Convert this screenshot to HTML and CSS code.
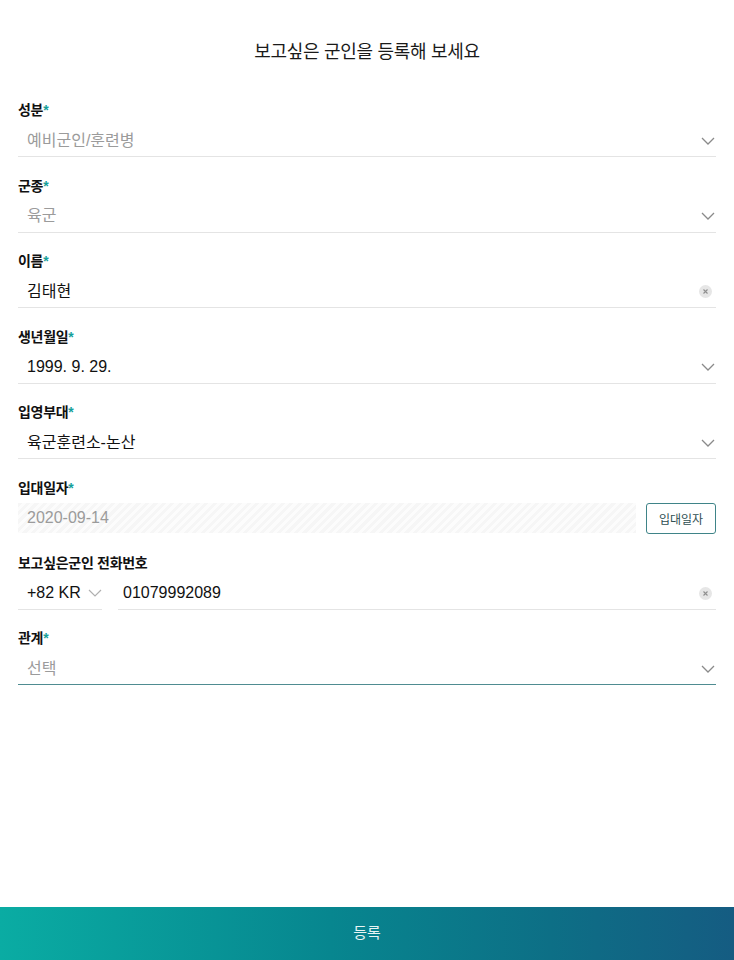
FILE: index.html
```html
<!DOCTYPE html>
<html lang="ko">
<head>
<meta charset="utf-8">
<title>보고싶은 군인 등록</title>
<link rel="stylesheet" href="styles.css">
</head>
<body>
<div class="page">
  <h1 class="title">보고싶은 군인을 등록해 보세요</h1>
  <form class="form">
    <div class="field">
      <div class="label">성분<span class="req">*</span></div>
      <div class="input">
        <span class="val placeholder">예비군인/훈련병</span>
        <svg class="chev" width="14" height="8" viewBox="0 0 14 8"><path d="M1 1l6 6 6-6" fill="none" stroke="#8a8a8a" stroke-width="1.3"/></svg>
      </div>
    </div>
    <div class="field">
      <div class="label">군종<span class="req">*</span></div>
      <div class="input">
        <span class="val placeholder">육군</span>
        <svg class="chev" width="14" height="8" viewBox="0 0 14 8"><path d="M1 1l6 6 6-6" fill="none" stroke="#8a8a8a" stroke-width="1.3"/></svg>
      </div>
    </div>
    <div class="field">
      <div class="label">이름<span class="req">*</span></div>
      <div class="input">
        <span class="val">김태현</span>
        <span class="clear"><svg width="13" height="13" viewBox="0 0 13 13"><circle cx="6.5" cy="6.5" r="6.5" fill="#e6e6e6"/><path d="M4.5 4.5l4 4M8.5 4.5l-4 4" stroke="#8f8f8f" stroke-width="1.1"/></svg></span>
      </div>
    </div>
    <div class="field">
      <div class="label">생년월일<span class="req">*</span></div>
      <div class="input">
        <span class="val">1999. 9. 29.</span>
        <svg class="chev" width="14" height="8" viewBox="0 0 14 8"><path d="M1 1l6 6 6-6" fill="none" stroke="#8a8a8a" stroke-width="1.3"/></svg>
      </div>
    </div>
    <div class="field">
      <div class="label">입영부대<span class="req">*</span></div>
      <div class="input">
        <span class="val">육군훈련소-논산</span>
        <svg class="chev" width="14" height="8" viewBox="0 0 14 8"><path d="M1 1l6 6 6-6" fill="none" stroke="#8a8a8a" stroke-width="1.3"/></svg>
      </div>
    </div>
    <div class="field">
      <div class="label">입대일자<span class="req">*</span></div>
      <div class="row">
        <div class="input disabled">
          <span class="val placeholder">2020-09-14</span>
        </div>
        <button type="button" class="date-btn">입대일자</button>
      </div>
    </div>
    <div class="field">
      <div class="label">보고싶은군인 전화번호</div>
      <div class="row phone">
        <div class="input country">
          <span class="val">+82 KR</span>
          <svg class="chev small" width="14" height="8" viewBox="0 0 14 8"><path d="M1 1l6 6 6-6" fill="none" stroke="#b0b0b0" stroke-width="1.2"/></svg>
        </div>
        <div class="input number">
          <span class="val">01079992089</span>
          <span class="clear"><svg width="13" height="13" viewBox="0 0 13 13"><circle cx="6.5" cy="6.5" r="6.5" fill="#e6e6e6"/><path d="M4.5 4.5l4 4M8.5 4.5l-4 4" stroke="#8f8f8f" stroke-width="1.1"/></svg></span>
        </div>
      </div>
    </div>
    <div class="field">
      <div class="label">관계<span class="req">*</span></div>
      <div class="input focused">
        <span class="val placeholder">선택</span>
        <svg class="chev" width="14" height="8" viewBox="0 0 14 8"><path d="M1 1l6 6 6-6" fill="none" stroke="#8a8a8a" stroke-width="1.3"/></svg>
      </div>
    </div>
  </form>
</div>
<button type="button" class="submit">등록</button>
</body>
</html>
```
FILE: styles.css
```css
* { box-sizing: border-box; }
html, body { margin: 0; padding: 0; background: #fff; }
body {
  font-family: "Liberation Sans", "Noto Sans CJK KR", sans-serif;
  color: #111;
  width: 734px;
  height: 960px;
  position: relative;
  overflow: hidden;
}
.page { padding: 39px 18px 0; }
.title {
  margin: 0 0 35px;
  font-size: 18px;
  line-height: 26px;
  font-weight: 400;
  text-align: center;
  color: #1a1a1a;
  letter-spacing: -0.3px;
}
.form { display: flex; flex-direction: column; }
.field { margin-bottom: 18.6px; }
.label {
  font-size: 14px;
  line-height: 20px;
  font-weight: 700;
  color: #111;
  margin-bottom: 5px;
  letter-spacing: -0.3px;
}
.req { color: #16a09a; }
.input {
  display: flex;
  align-items: center;
  height: 32px;
  padding: 0 0 0 9px;
  border-bottom: 1px solid #e4e4e4;
}
.val {
  flex: 1;
  font-size: 16px;
  line-height: 20px;
  color: #111;
}
.placeholder { color: #9b9b9b; }
.chev { margin-right: 1px; flex: none; }
.clear { display: flex; margin-right: 4px; }
.row { display: flex; align-items: flex-end; gap: 10px; }
.row .input { flex: 1; }
.disabled {
  border-bottom: none;
  height: 30px;
  margin-bottom: 1px;
  background: repeating-linear-gradient(135deg, #f6f6f6 0 3px, #fcfcfc 3px 6px);
}
.date-btn {
  flex: none;
  width: 70px;
  height: 31px;
  border: 1px solid #3f8488;
  border-radius: 3px;
  background: #fff;
  font-family: "Noto Sans CJK KR", sans-serif;
  font-size: 12px;
  color: #2f4f52;
  padding: 0;
}
.phone { gap: 16px; }
.phone .country { flex: none; width: 84px; }
.phone .country .val { flex: none; margin-right: 7px; }
.phone .number { padding-left: 5px; }
.focused { border-bottom-color: #4f8c91; }
.submit {
  position: absolute;
  left: 0;
  bottom: 0;
  width: 734px;
  height: 53px;
  border: none;
  margin: 0;
  background: linear-gradient(90deg, #0aaca3 0%, #07868f 45%, #0d6f86 75%, #155c82 100%);
  color: #e8f4f4;
  font-family: "Noto Sans CJK KR", sans-serif;
  font-size: 15px;
  padding: 0 0 5px;
}
```
